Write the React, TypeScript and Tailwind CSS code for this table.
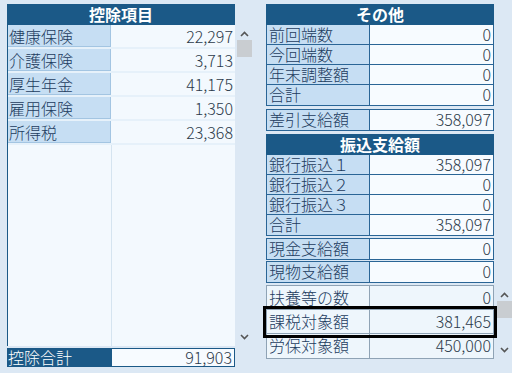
import React from 'react';

const font = { fontFamily: '"Noto Sans CJK JP", "Noto Sans", sans-serif' };

const deductions = [
  { label: '健康保険', value: '22,297' },
  { label: '介護保険', value: '3,713' },
  { label: '厚生年金', value: '41,175' },
  { label: '雇用保険', value: '1,350' },
  { label: '所得税', value: '23,368' },
];

const others = [
  { label: '前回端数', value: '0' },
  { label: '今回端数', value: '0' },
  { label: '年末調整額', value: '0' },
  { label: '合計', value: '0' },
];

const transfers = [
  { label: '銀行振込１', value: '358,097' },
  { label: '銀行振込２', value: '0' },
  { label: '銀行振込３', value: '0' },
  { label: '合計', value: '358,097' },
];

const Header = ({ title, className = '' }: { title: string; className?: string }) => (
  <div
    className={`h-[21px] bg-[#1b5987] text-white font-bold text-[16px] leading-[21px] text-center ${className}`}
  >
    {title}
  </div>
);

const ScrollBar = ({ height, arrowTop, thumbTop }: { height: number; arrowTop: number; thumbTop: number }) => (
  <div className="w-[16px] flex flex-col items-center" style={{ height }}>
    <svg width="9" height="6" viewBox="0 0 9 6" style={{ marginTop: arrowTop }}>
      <path d="M1 5 L4.5 1.5 L8 5" stroke="#555" strokeWidth="1.6" fill="none" />
    </svg>
    <div className="w-[15px] h-[17px] bg-[#c9cdd1]" style={{ marginTop: thumbTop }} />
    <div className="flex-1" />
    <svg width="9" height="6" viewBox="0 0 9 6" className="mb-[5px]">
      <path d="M1 1 L4.5 4.5 L8 1" stroke="#555" strokeWidth="1.6" fill="none" />
    </svg>
  </div>
);

// 枠付きの一行（ラベル＋金額）
const Row = ({
  label,
  value,
  h = 'h-[20px]',
  last = false,
}: {
  label: string;
  value: string;
  h?: string;
  last?: boolean;
}) => (
  <div className={`flex ${h} ${last ? '' : 'border-b border-[#2a6596]'}`}>
    <div className="w-[103px] bg-[#c6def3] border-r border-[#2a6596] pl-[2px] text-[16px] leading-[19px] text-[#1c3b5e]">
      {label}
    </div>
    <div className="flex-1 bg-[#f7fbff] text-right pr-[2px] text-[16px] leading-[19px] text-[#2b3a4a]">
      {value}
    </div>
  </div>
);

const App = () => {
  return (
    <div className="w-[512px] h-[373px] bg-[#dce8f4] flex pl-[7px] pt-[4px] font-light" style={font}>
      {/* 控除項目 */}
      <div className="flex">
        <div className="w-[228px] flex flex-col">
          <Header title="控除項目" className="h-[20px] leading-[20px]" />
          <div className="h-[321px] flex flex-col border-l border-[#1b5987] bg-[#e6f1fa]">
            {deductions.map((d) => (
              <div key={d.label} className="flex h-[22px] mb-[2px]">
                <div className="w-[103px] bg-[#c6def3] border-r border-b border-[#a3c5e2] pl-[1px] text-[16px] leading-[22px] text-[#1c3b5e]">
                  {d.label}
                </div>
                <div className="flex-1 bg-[#f3f9fe] text-right pr-[2px] text-[16px] leading-[22px] text-[#2b3a4a]">
                  {d.value}
                </div>
              </div>
            ))}
            <div className="flex flex-1 bg-[#f3f9fe]">
              <div className="w-[104px] border-r border-[#d5e4f0]" />
              <div className="flex-1" />
            </div>
          </div>
          <div className="flex h-[19px] mt-[2px]">
            <div className="w-[104px] bg-[#1b5987] text-white pl-[1px] text-[16px] leading-[19px]">
              控除合計
            </div>
            <div className="flex-1 bg-[#f7fbff] border border-[#1b5987] text-right pr-[2px] text-[16px] leading-[17px] text-[#2b3a4a]">
              91,903
            </div>
          </div>
        </div>
        <div className="pt-[20px] pl-[1px]">
          <ScrollBar height={321} arrowTop={7} thumbTop={3} />
        </div>
      </div>

      {/* 右側 */}
      <div className="ml-[14px] flex">
        <div className="w-[228px] flex flex-col">
          <Header title="その他" />
          <div className="border border-t-0 border-[#2a6596]">
            {others.map((o, i) => (
              <Row key={o.label} label={o.label} value={o.value} last={i === others.length - 1} />
            ))}
          </div>
          <div className="mt-[3px] border border-[#2a6596]">
            <Row label="差引支給額" value="358,097" last />
          </div>
          <Header title="振込支給額" className="mt-[3px]" />
          <div className="border border-t-0 border-[#2a6596]">
            {transfers.map((t, i) => (
              <Row key={t.label} label={t.label} value={t.value} last={i === transfers.length - 1} />
            ))}
          </div>
          <div className="mt-[2px] border border-[#2a6596]">
            <Row label="現金支給額" value="0" last />
          </div>
          <div className="mt-[1px] border border-[#2a6596]">
            <Row label="現物支給額" value="0" last />
          </div>
          <div className="mt-[2px] border border-[#8fa3b5] bg-[#eef6fc]">
            {[
              { label: '扶養等の数', value: '0' },
              { label: '課税対象額', value: '381,465', focus: true },
              { label: '労保対象額', value: '450,000' },
            ].map((r, i) => (
              <div
                key={r.label}
                className={`flex h-[24px] ${i < 2 ? 'border-b border-[#8fa3b5]' : ''} ${
                  r.focus ? 'outline-[3px] outline-black outline-offset-[1px] relative' : ''
                }`}
              >
                <div className="w-[103px] border-r border-[#8fa3b5] pl-[2px] text-[16px] leading-[23px] text-[#1c3b5e]">
                  {r.label}
                </div>
                <div className="flex-1 text-right pr-[2px] text-[16px] leading-[23px] text-[#2b3a4a]">
                  {r.value}
                </div>
              </div>
            ))}
          </div>
        </div>
        <div className="pl-[2px]" style={{ paddingTop: 281 }}>
          <ScrollBar height={73} arrowTop={7} thumbTop={3} />
        </div>
      </div>
    </div>
  );
};

export default App;
